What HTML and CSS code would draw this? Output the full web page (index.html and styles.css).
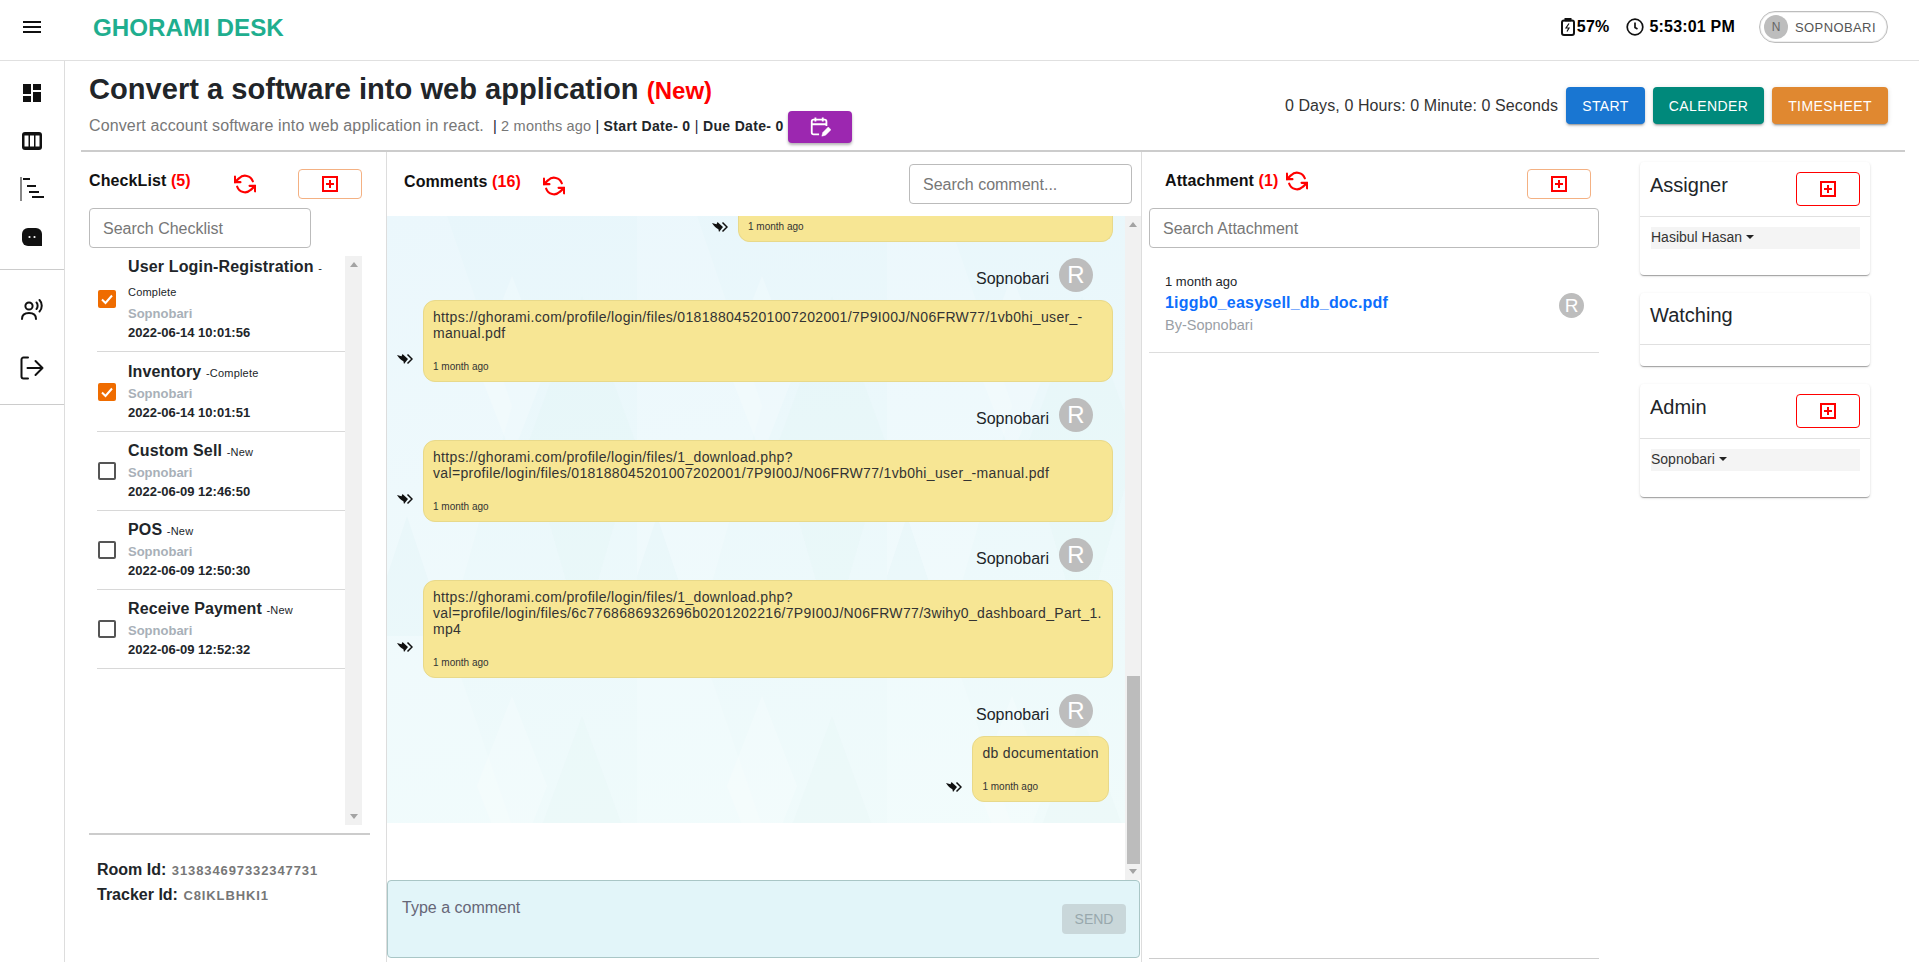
FILE: index.html
```html
<!DOCTYPE html>
<html>
  <head>
    <meta charset="utf-8" />
    <title>Ghorami Desk</title>
    <link rel="stylesheet" href="styles.css">
  </head>
  <body>
    <svg class="defs">
      <symbol id="refresh" viewBox="0 0 24 24">
        <polyline points="1 4 1 10 7 10" />
        <polyline points="23 20 23 14 17 14" />
        <path d="M20.49 9A9 9 0 0 0 5.64 5.64L1 10m22 4l-4.64 4.36A9 9 0 0 1 3.51 15" />
      </symbol>
      <symbol id="plus" viewBox="0 0 16 16">
        <rect x="1" y="1" width="14" height="14" />
        <path d="M8 4v8M4 8h8" />
      </symbol>
      <symbol id="reply" viewBox="0 0 16 12">
        <path class="reply-fill" d="M0 2 L4.5 3.2 L5.5 1 L11 6 L7 11 L6.4 8.2 Q3 7 0 2Z" />
        <path class="reply-line" d="M10.5 1.5 L15 6 L10.5 10.5" />
      </symbol>
    </svg>

    <header class="topbar">
      <svg class="menu-icon" viewBox="3 6 18 12"><path d="M3 18h18v-2H3v2zm0-5h18v-2H3v2zm0-7v2h18V6H3z" /></svg>
      <div class="brand">GHORAMI DESK</div>
      <div class="status">
        <svg class="battery" viewBox="0 0 14 18">
          <path d="M4.5 0.5h5v2h-5z" class="solid" />
          <rect x="1" y="2.5" width="12" height="14.5" rx="2" />
          <path d="M8 5.5L5 10h3l-2 3.5" class="bolt" />
        </svg>
        <span class="status-text percent">57%</span>
        <svg class="clock" viewBox="0 0 18 18">
          <circle cx="9" cy="9" r="7.8" />
          <path d="M9 4.5V9.5L11.5 11" />
        </svg>
        <span class="status-text">5:53:01 PM</span>
        <div class="chip">
          <span class="chip-avatar">N</span>
          <span class="chip-label">SOPNOBARI</span>
        </div>
      </div>
    </header>

    <div class="main">
      <nav class="sidebar">
        <div class="nav-group">
          <svg class="nav-icon icon-dash" viewBox="3 3 18 18"><path d="M3 13h8V3H3v10zm0 8h8v-6H3v6zm10 0h8V11h-8v10zm0-18v6h8V3h-8z" /></svg>
          <svg class="nav-icon icon-table" viewBox="0 0 20 18">
            <rect width="20" height="18" rx="3" />
            <path class="cut" d="M2.5 3.5h4v11h-4zM8 3.5h4v11H8zM13.5 3.5h4v11h-4z" />
          </svg>
          <svg class="nav-icon icon-gantt" viewBox="0 0 24 24">
            <path d="M0.5 0h1v24h-1zM3 1h7v2H3zM7 8h9v2H7zM9 14h10v2H9zM12 19h12v2H12z" />
          </svg>
          <svg class="nav-icon icon-blob" viewBox="0 0 20 18">
            <path d="M6 0h8a6 6 0 0 1 6 6v12H6a6 6 0 0 1-6-6V6a6 6 0 0 1 6-6z" />
            <circle class="cut" cx="7.5" cy="9" r="1.1" />
            <circle class="cut" cx="12.5" cy="9" r="1.1" />
          </svg>
        </div>
        <div class="nav-group nav-group-low">
          <svg class="nav-line icon-voice" viewBox="0 0 24 24">
            <circle cx="9" cy="8" r="3.6" />
            <path d="M2 21c0-4 3-6 7-6s7 2 7 6" />
            <path d="M16.5 4.5c1.5 1.5 1.5 5 0 6.5M19.5 2c3 3 3 8.5 0 11.5" />
          </svg>
          <svg class="nav-line icon-exit" viewBox="0 0 24 24">
            <path d="M8 1.5H3.5a2 2 0 0 0-2 2v17a2 2 0 0 0 2 2H8" />
            <path d="M7.5 12h15M15.5 5l7 7-7 7" />
          </svg>
        </div>
      </nav>

      <div class="content">
        <section class="task-head">
          <div class="task-info">
            <h1 class="task-title">Convert a software into web application <span class="task-state">(New)</span></h1>
            <div class="task-meta">
              <span class="task-desc">Convert account software into web application in react.</span>
              <span class="task-age"><span class="pipe">|</span> 2 months ago</span>
              <span class="task-dates"><span class="pipe">|</span> Start Date- 0 <span class="pipe">|</span> Due Date- 0</span>
              <button class="btn-date">
                <svg viewBox="0 0 24 24">
                  <path d="M11 20H5a2 2 0 0 1-2-2V6a2 2 0 0 1 2-2h12a2 2 0 0 1 2 2v5M3 9h16M7 1.5V6M15 1.5V6" />
                  <path class="pen" d="M14 22l1-4 6-6 3 3-6 6z" />
                </svg>
              </button>
            </div>
          </div>
          <div class="task-actions">
            <span class="timer">0 Days, 0 Hours: 0 Minute: 0 Seconds</span>
            <button class="btn btn-blue">START</button>
            <button class="btn btn-teal">CALENDER</button>
            <button class="btn btn-orange">TIMESHEET</button>
          </div>
        </section>

        <div class="columns">
          <section class="col-check">
            <div class="col-head">
              <div class="col-title check-title">CheckList <span class="count">(5)</span></div>
              <svg class="refresh check-refresh"><use href="#refresh" /></svg>
              <button class="add-btn"><svg class="plus"><use href="#plus" /></svg></button>
            </div>
            <input class="search search-check" type="text" placeholder="Search Checklist" />
            <div class="check-wrap">
              <div class="check-list">
                <div class="check-row check-row-wrap">
                  <span class="box box-on"><svg viewBox="0 0 18 18"><path d="M4 9.5l3.5 3.5L14 5.5" /></svg></span>
                  <div class="row-text">
                    <div class="row-title">User Login-Registration <small>-</small></div>
                    <div class="row-status">Complete</div>
                    <div class="row-by">Sopnobari</div>
                    <div class="row-date">2022-06-14 10:01:56</div>
                  </div>
                </div>
                <div class="check-row check-row-second">
                  <span class="box box-on"><svg viewBox="0 0 18 18"><path d="M4 9.5l3.5 3.5L14 5.5" /></svg></span>
                  <div class="row-text">
                    <div class="row-title">Inventory <small>-Complete</small></div>
                    <div class="row-by">Sopnobari</div>
                    <div class="row-date">2022-06-14 10:01:51</div>
                  </div>
                </div>
                <div class="check-row">
                  <span class="box"></span>
                  <div class="row-text">
                    <div class="row-title">Custom Sell <small>-New</small></div>
                    <div class="row-by">Sopnobari</div>
                    <div class="row-date">2022-06-09 12:46:50</div>
                  </div>
                </div>
                <div class="check-row">
                  <span class="box"></span>
                  <div class="row-text">
                    <div class="row-title">POS <small>-New</small></div>
                    <div class="row-by">Sopnobari</div>
                    <div class="row-date">2022-06-09 12:50:30</div>
                  </div>
                </div>
                <div class="check-row">
                  <span class="box"></span>
                  <div class="row-text">
                    <div class="row-title">Receive Payment <small>-New</small></div>
                    <div class="row-by">Sopnobari</div>
                    <div class="row-date">2022-06-09 12:52:32</div>
                  </div>
                </div>
              </div>
              <div class="scroll scroll-check">
                <i class="arrow-up"></i>
                <i class="scroll-space"></i>
                <i class="arrow-down"></i>
              </div>
            </div>
            <div class="room">
              <div class="room-line">Room Id: <span>313834697332347731</span></div>
              <div class="room-line">Tracker Id: <span>C8IKLBHKI1</span></div>
            </div>
          </section>

          <section class="col-comments">
            <div class="comments-head">
              <div class="col-title">Comments <span class="count">(16)</span></div>
              <svg class="refresh comments-refresh"><use href="#refresh" /></svg>
              <input class="search search-comment" type="text" placeholder="Search comment..." />
            </div>
            <div class="thread">
              <div class="feed">
                <div class="feed-bg">
                  <svg class="pattern" width="738" height="607">
                    <defs>
                      <pattern id="diamonds" width="250" height="420" patternUnits="userSpaceOnUse">
                        <polygon points="0,0 60,0 125,190 60,420 0,420" fill="#ffffff" opacity="0.14" />
                        <polygon points="125,60 160,150 125,240 90,150" fill="#ffffff" opacity="0.2" />
                        <polygon points="195,80 250,230 195,420 140,230" fill="#d5eff3" opacity="0.1" />
                        <polygon points="20,300 60,420 -20,420" fill="#cfeef3" opacity="0.14" />
                      </pattern>
                    </defs>
                    <rect width="738" height="607" fill="url(#diamonds)" />
                  </svg>
                  <div class="msg-row msg-row-first">
                    <svg class="reply"><use href="#reply" /></svg>
                    <div class="bubble bubble-cut">
                      <div class="msg-time">1 month ago</div>
                    </div>
                  </div>

                  <div class="msg-user"><span class="msg-name">Sopnobari</span><span class="avatar">R</span></div>
                  <div class="msg-row">
                    <svg class="reply"><use href="#reply" /></svg>
                    <div class="bubble bubble-wide">
                      <div class="msg-text">https://ghorami.com/profile/login/files/018188045201007202001/7P9I00J/N06FRW77/1vb0hi_user_-manual.pdf</div>
                      <div class="msg-time">1 month ago</div>
                    </div>
                  </div>

                  <div class="msg-user"><span class="msg-name">Sopnobari</span><span class="avatar">R</span></div>
                  <div class="msg-row">
                    <svg class="reply"><use href="#reply" /></svg>
                    <div class="bubble bubble-wide">
                      <div class="msg-text">https://ghorami.com/profile/login/files/1_download.php?<br>val=profile/login/files/018188045201007202001/7P9I00J/N06FRW77/1vb0hi_user_-manual.pdf</div>
                      <div class="msg-time">1 month ago</div>
                    </div>
                  </div>

                  <div class="msg-user"><span class="msg-name">Sopnobari</span><span class="avatar">R</span></div>
                  <div class="msg-row">
                    <svg class="reply"><use href="#reply" /></svg>
                    <div class="bubble bubble-wide">
                      <div class="msg-text">https://ghorami.com/profile/login/files/1_download.php?<br>val=profile/login/files/6c7768686932696b0201202216/7P9I00J/N06FRW77/3wihy0_dashboard_Part_1.<br>mp4</div>
                      <div class="msg-time">1 month ago</div>
                    </div>
                  </div>

                  <div class="msg-user"><span class="msg-name">Sopnobari</span><span class="avatar">R</span></div>
                  <div class="msg-row msg-row-last">
                    <svg class="reply"><use href="#reply" /></svg>
                    <div class="bubble">
                      <div class="msg-text">db documentation</div>
                      <div class="msg-time">1 month ago</div>
                    </div>
                  </div>
                </div>
              </div>
              <div class="scroll scroll-feed">
                <i class="arrow-up"></i>
                <i class="scroll-space"></i>
                <i class="scroll-thumb"></i>
                <i class="arrow-down"></i>
              </div>
            </div>
            <div class="composer">
              <span class="composer-hint">Type a comment</span>
              <button class="send">SEND</button>
            </div>
          </section>

          <section class="col-files">
            <div class="col-head files-head">
              <div class="col-title">Attachment <span class="count">(1)</span></div>
              <svg class="refresh files-refresh"><use href="#refresh" /></svg>
              <button class="add-btn files-add"><svg class="plus"><use href="#plus" /></svg></button>
            </div>
            <input class="search search-file" type="text" placeholder="Search Attachment" />
            <div class="file-list">
              <div class="file-row">
                <div>
                  <div class="file-time">1 month ago</div>
                  <div class="file-name">1iggb0_easysell_db_doc.pdf</div>
                  <div class="file-by">By-Sopnobari</div>
                </div>
                <span class="avatar avatar-small">R</span>
              </div>
            </div>
          </section>

          <aside class="col-people">
            <div class="card">
              <div class="card-head">
                <h3 class="card-title">Assigner</h3>
                <button class="card-add"><svg class="plus"><use href="#plus" /></svg></button>
              </div>
              <div class="card-body">
                <div class="person">Hasibul Hasan<i class="caret"></i></div>
              </div>
            </div>
            <div class="card card-empty">
              <div class="card-head">
                <h3 class="card-title">Watching</h3>
              </div>
            </div>
            <div class="card">
              <div class="card-head">
                <h3 class="card-title">Admin</h3>
                <button class="card-add"><svg class="plus"><use href="#plus" /></svg></button>
              </div>
              <div class="card-body">
                <div class="person">Sopnobari<i class="caret"></i></div>
              </div>
            </div>
          </aside>
        </div>
      </div>
    </div>
  </body>
</html>
```

FILE: styles.css
```css
* {
  box-sizing: border-box;
}

html,
body {
  margin: 0;
  height: 962px;
  overflow: hidden;
}

body {
  font-family: "Liberation Sans", Arial, sans-serif;
  color: #212529;
  background: #fff;
}

button {
  font-family: inherit;
  cursor: pointer;
}

.defs {
  display: none;
}

/* top bar */
.topbar {
  height: 61px;
  border-bottom: 1px solid #e0e0e0;
  display: flex;
  align-items: center;
  padding: 0 31px 6px 23px;
}

.menu-icon {
  width: 18px;
  height: 12px;
  fill: #111;
}

.brand {
  margin: 2px 0 0 52px;
  font-size: 24.2px;
  font-weight: 700;
  color: #1fae8f;
}

.status {
  margin-left: auto;
  display: flex;
  align-items: center;
}

.battery {
  width: 14px;
  height: 18px;
  fill: none;
  stroke: #111;
  stroke-width: 2;
}

.battery .solid {
  fill: #111;
}

.battery .bolt {
  stroke-width: 1.2;
}

.status-text {
  font-size: 16px;
  font-weight: 700;
  letter-spacing: 0.2px;
  color: #000;
}

.percent {
  margin-left: 2px;
}

.clock {
  width: 18px;
  height: 18px;
  margin: 0 5px 0 17px;
  fill: none;
  stroke: #111;
  stroke-width: 1.7;
}

.chip {
  margin-left: 24px;
  width: 129px;
  height: 32px;
  border: 1px solid #bdbdbd;
  border-radius: 16px;
  display: flex;
  align-items: center;
  padding-left: 4px;
  box-shadow: inset 0 0 0 1px #eee;
}

.chip-avatar {
  width: 24px;
  height: 24px;
  border-radius: 50%;
  background: #bdbdbd;
  color: #666;
  font-size: 12px;
  display: flex;
  align-items: center;
  justify-content: center;
}

.chip-label {
  margin-left: 7px;
  font-size: 13px;
  letter-spacing: 0.4px;
  color: #555;
}

/* layout */
.main {
  display: flex;
  height: 901px;
}

.sidebar {
  width: 65px;
  flex: none;
  border-right: 1px solid #ddd;
}

.nav-group {
  height: 209px;
  border-bottom: 1px solid #ccc;
  display: flex;
  flex-direction: column;
  padding-top: 23px;
}

.nav-group-low {
  height: 135px;
  padding-top: 28px;
}

.nav-icon {
  display: block;
  fill: #111;
}

.nav-icon .cut {
  fill: #fff;
}

.icon-dash {
  width: 18px;
  height: 18px;
  margin-left: 23px;
}

.icon-table {
  width: 20px;
  height: 18px;
  margin: 30px 0 0 22px;
}

.icon-gantt {
  width: 24px;
  height: 24px;
  margin: 27px 0 0 20px;
}

.icon-blob {
  width: 20px;
  height: 18px;
  margin: 27px 0 0 22px;
}

.nav-line {
  display: block;
  width: 24px;
  height: 24px;
  margin-left: 20px;
  fill: none;
  stroke: #111;
  stroke-width: 2;
  stroke-linecap: round;
  stroke-linejoin: round;
}

.icon-exit {
  margin-top: 34px;
}

.content {
  flex: 1;
  min-width: 0;
  display: flex;
  flex-direction: column;
}

/* task header */
.task-head {
  height: 91px;
  margin: 0 14px 0 16px;
  padding: 10px 17px 0 8px;
  border-bottom: 2px solid #ccc;
  display: flex;
  justify-content: space-between;
}

.task-title {
  margin: 0;
  height: 36px;
  font-size: 29.1px;
  font-weight: 700;
  line-height: 36px;
  color: #212529;
}

.task-state {
  font-size: 24px;
  color: #f00;
}

.task-meta {
  margin-top: 4px;
  height: 32px;
  display: flex;
  align-items: center;
  white-space: pre;
}

.task-desc {
  margin-top: -2px;
  font-size: 16px;
  letter-spacing: 0.13px;
  color: #777;
}

.task-age {
  margin: -2px 0 0 9px;
  font-size: 14.5px;
  letter-spacing: 0.2px;
  color: #777;
}

.task-dates {
  margin: -2px 0 0 4px;
  font-size: 14px;
  font-weight: 700;
  letter-spacing: 0.34px;
}

.pipe {
  font-weight: 400;
  color: #223;
}

.btn-date {
  width: 64px;
  height: 32px;
  margin-left: 4px;
  border: 0;
  border-radius: 4px;
  background: #9c27b0;
  box-shadow: 0 2px 3px rgba(0, 0, 0, 0.3);
  display: flex;
  align-items: center;
  justify-content: center;
}

.btn-date svg {
  width: 22px;
  height: 22px;
  fill: none;
  stroke: #fff;
  stroke-width: 2;
}

.btn-date .pen {
  fill: #fff;
  stroke-width: 0.5;
}

.task-actions {
  margin-top: 16px;
  height: 37px;
  display: flex;
  align-items: center;
}

.timer {
  margin-right: 8px;
  font-size: 16px;
  letter-spacing: 0.1px;
  color: #333;
}

.btn {
  height: 37px;
  margin-left: 8px;
  padding: 0;
  border: 0;
  border-radius: 4px;
  color: #fff;
  font-size: 14px;
  letter-spacing: 0.4px;
  box-shadow: 0 3px 1px -2px rgba(0, 0, 0, 0.2), 0 2px 2px rgba(0, 0, 0, 0.14), 0 1px 5px rgba(0, 0, 0, 0.12);
}

.timer + .btn {
  margin-left: 0;
}

.btn-blue {
  width: 79px;
  background: #1976d2;
}

.btn-teal {
  width: 111px;
  background: #00897b;
}

.btn-orange {
  width: 116px;
  background: #e08830;
}

/* columns */
.columns {
  flex: 1;
  min-height: 0;
  display: flex;
}

.col-check {
  width: 321px;
  flex: none;
  padding-left: 24px;
}

.col-head {
  display: flex;
  align-items: center;
  height: 30px;
  margin-top: 17px;
}

.col-title {
  font-size: 16px;
  font-weight: 700;
  letter-spacing: 0.1px;
  color: #111;
  white-space: nowrap;
}

.check-title {
  width: 145px;
  margin-bottom: 6px;
}

.files-head .col-title {
  margin-bottom: 6px;
}

.count {
  color: #f00;
}

.refresh {
  width: 22px;
  height: 22px;
  fill: none;
  stroke: #f00;
  stroke-width: 2.4;
  stroke-linecap: round;
  stroke-linejoin: round;
}

.add-btn {
  width: 64px;
  height: 30px;
  margin-left: 42px;
  padding: 0;
  background: #fff;
  border: 1px solid #f4b183;
  border-radius: 4px;
  display: flex;
  align-items: center;
  justify-content: center;
}

.plus {
  width: 16px;
  height: 16px;
  fill: none;
  stroke: #f00;
  stroke-width: 2;
}

.search {
  display: block;
  height: 40px;
  margin-top: 9px;
  padding: 2px 13px 0;
  font: 16px "Liberation Sans", sans-serif;
  color: #333;
  background: #fff;
  border: 1px solid #bbb;
  border-radius: 4px;
  outline: 0;
}

.search::placeholder {
  color: #777;
  opacity: 1;
}

.search-check {
  width: 222px;
}

.check-wrap {
  height: 569px;
  margin: 8px 0 0 8px;
  width: 265px;
  display: flex;
}

.check-list {
  width: 248px;
}

.check-row {
  height: 79px;
  padding: 8px 0 0 1px;
  border-bottom: 1px solid #d8d8d8;
  display: flex;
  align-items: center;
}

.check-row-wrap {
  height: 96px;
  padding-top: 0;
}

.check-row-second {
  height: 80px;
}

.box {
  width: 18px;
  height: 18px;
  flex: none;
  margin: -8px 12px 0 0;
  border: 2px solid #555;
  border-radius: 2px;
}

.check-row-wrap .box {
  margin-top: -10px;
}

.box-on {
  border: 0;
  background: #ef6c00;
}

.box-on svg {
  display: block;
  width: 18px;
  height: 18px;
  fill: none;
  stroke: #fff;
  stroke-width: 2;
}

.row-title {
  font-size: 16px;
  font-weight: 700;
  line-height: 22px;
  letter-spacing: 0.15px;
  color: #212529;
  white-space: nowrap;
}

.row-title small {
  font-size: 11px;
  font-weight: 400;
  letter-spacing: 0.2px;
}

.row-status {
  height: 25px;
  padding-top: 1px;
  font-size: 11px;
  letter-spacing: 0.2px;
  line-height: 25px;
}

.row-by {
  font-size: 13px;
  font-weight: 700;
  line-height: 20px;
  color: #a8b0b8;
}

.row-date {
  margin-bottom: 9px;
  font-size: 13px;
  font-weight: 700;
  line-height: 18px;
}

.scroll {
  width: 17px;
  background: #f1f1f1;
  display: flex;
  flex-direction: column;
  align-items: center;
}

.scroll-space {
  flex: 1;
}

.arrow-up,
.arrow-down {
  width: 0;
  height: 0;
  margin: 6px 0;
  border-left: 4px solid transparent;
  border-right: 4px solid transparent;
}

.arrow-up {
  border-bottom: 5px solid #a3a3a3;
}

.arrow-down {
  border-top: 5px solid #a3a3a3;
}

.room {
  margin-top: 8px;
  width: 281px;
  padding: 23px 0 0 8px;
  border-top: 2px solid #ccc;
}

.room-line {
  font-size: 16px;
  font-weight: 700;
  line-height: 24px;
  color: #212529;
}

.room-line span {
  margin-left: 1px;
  font-size: 13px;
  letter-spacing: 0.9px;
  color: #777;
}

/* comments */
.col-comments {
  width: 756px;
  flex: none;
  border-left: 1px solid #ddd;
  border-right: 1px solid #ddd;
  display: flex;
  flex-direction: column;
}

.comments-head {
  height: 64px;
  padding-left: 17px;
  display: flex;
  align-items: flex-start;
}

.comments-head .col-title {
  margin-top: 21px;
}

.comments-refresh {
  margin: 23px 0 0 22px;
}

.search-comment {
  width: 223px;
  margin: 12px 9px 0 auto;
}

.thread {
  height: 664px;
  display: flex;
}

.feed {
  flex: 1;
  min-width: 0;
}

.feed-bg {
  position: relative;
  height: 607px;
  overflow: hidden;
  background: linear-gradient(170deg, #e8f6fb, #f0fbfb);
}

.pattern {
  position: absolute;
  left: 0;
  top: 0;
}

.msg-row {
  position: relative;
  display: flex;
  justify-content: flex-end;
  align-items: center;
  padding-right: 12px;
}

.msg-row-last {
  padding-right: 16px;
}

.reply {
  width: 16px;
  height: 12px;
  margin: 36px 10px 0 0;
  flex: none;
}

.msg-row-first .reply {
  margin-top: -4px;
}

.reply-fill {
  fill: #111;
}

.reply-line {
  fill: none;
  stroke: #111;
  stroke-width: 1.5;
}

.bubble {
  padding: 8px 9px;
  background: #f7e694;
  border: 1px solid #e8d98a;
  border-radius: 12px;
}

.bubble-wide {
  width: 690px;
}

.bubble-cut {
  width: 375px;
  padding-top: 5px;
  border-top: 0;
  border-radius: 0 0 12px 12px;
}

.bubble-cut .msg-time {
  margin-top: 0;
}

.msg-text {
  font-size: 14px;
  line-height: 16px;
  letter-spacing: 0.33px;
  color: #333;
  overflow-wrap: anywhere;
}

.msg-time {
  margin-top: 20px;
  font-size: 10px;
  line-height: 12px;
  color: #333;
}

.msg-user {
  position: relative;
  height: 42px;
  margin-top: 16px;
  padding-right: 32px;
  display: flex;
  justify-content: flex-end;
  align-items: flex-start;
}

.msg-name {
  margin: 10px 10px 0 0;
  font-size: 16px;
  line-height: 22px;
  color: #212529;
}

.avatar {
  width: 34px;
  height: 34px;
  flex: none;
  border-radius: 50%;
  background: #bdbdbd;
  color: #fff;
  font-size: 24px;
  display: flex;
  align-items: center;
  justify-content: center;
}

.scroll-feed {
  width: 16px;
}

.scroll-thumb {
  width: 13px;
  height: 188px;
  background: #bcbcbc;
}

.scroll-feed .arrow-down {
  margin-top: 5px;
}

.composer {
  height: 78px;
  margin-right: 1px;
  padding: 17px 0 0 14px;
  background: #e2f5f9;
  border: 1px solid #a9c6c6;
  border-radius: 4px;
  display: flex;
  justify-content: space-between;
}

.composer-hint {
  font-size: 16px;
  line-height: 20px;
  color: #667;
}

.send {
  width: 64px;
  height: 30px;
  margin: 6px 13px 0 0;
  padding: 0;
  border: 0;
  border-radius: 4px;
  background: #c9d7da;
  color: #98a8ad;
  font-size: 14px;
}

/* attachments */
.col-files {
  width: 458px;
  flex: none;
  padding-left: 7px;
  display: flex;
  flex-direction: column;
}

.files-head {
  padding-left: 16px;
}

.files-refresh {
  margin: 0 0 6px 8px;
}

.files-add {
  margin-left: auto;
  margin-right: 9px;
}

.search-file {
  width: 450px;
}

.file-list {
  width: 450px;
  flex: 1;
  margin-bottom: 3px;
  border-bottom: 1px solid #ccc;
}

.file-row {
  height: 105px;
  padding: 26px 15px 0 16px;
  border-bottom: 1px solid #ddd;
  display: flex;
  justify-content: space-between;
  align-items: flex-start;
}

.file-time {
  font-size: 13px;
  line-height: 16px;
}

.file-name {
  font-size: 16px;
  font-weight: 700;
  line-height: 25px;
  letter-spacing: 0.2px;
  color: #0d6efd;
}

.file-by {
  font-size: 14.5px;
  line-height: 21px;
  color: #9aa0a6;
}

.avatar-small {
  width: 25px;
  height: 25px;
  margin-top: 19px;
  font-size: 19px;
}

/* people */
.col-people {
  width: 230px;
  flex: none;
  margin-left: 40px;
  padding-top: 10px;
}

.card {
  margin-bottom: 18px;
  border-radius: 4px;
  background: #fff;
  box-shadow: 0 2px 1px -1px rgba(0, 0, 0, 0.2), 0 1px 1px rgba(0, 0, 0, 0.14), 0 1px 3px rgba(0, 0, 0, 0.12);
}

.card-head {
  height: 55px;
  padding: 10px 10px 0 10px;
  border-bottom: 1px solid #e0e0e0;
  display: flex;
  justify-content: space-between;
  align-items: flex-start;
}

.card-title {
  margin: 0;
  font-size: 20px;
  font-weight: 400;
  line-height: 26px;
  color: #212529;
}

.card-add {
  width: 64px;
  height: 34px;
  padding: 0;
  background: #fff;
  border: 1px solid #f00;
  border-radius: 4px;
  display: flex;
  align-items: center;
  justify-content: center;
}

.card-body {
  height: 58px;
  padding: 10px 10px 0 11px;
}

.person {
  height: 22px;
  background: #f4f4f4;
  font-size: 14px;
  line-height: 20px;
  color: #333;
}

.caret {
  display: inline-block;
  margin: 0 0 3px 4px;
  border-left: 4px solid transparent;
  border-right: 4px solid transparent;
  border-top: 4px solid #222;
}

.card-empty {
  height: 73px;
}

.card-empty .card-head {
  height: 52px;
  padding-top: 9px;
}
```
